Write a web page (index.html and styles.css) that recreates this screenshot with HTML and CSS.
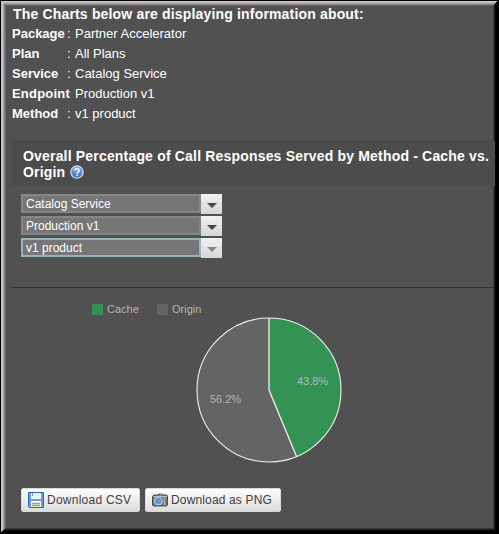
FILE: index.html
```
<!DOCTYPE html>
<html lang="en">
<head>
<meta charset="utf-8">
<title>Charts</title>
<link rel="stylesheet" href="styles.css">
</head>
<body>
<main class="frame">
  <section class="summary">
    <h1>The Charts below are displaying information about:</h1>
    <dl>
      <dt>Package</dt><dd><i>:</i>Partner Accelerator</dd>
      <dt>Plan</dt><dd><i>:</i>All Plans</dd>
      <dt>Service</dt><dd><i>:</i>Catalog Service</dd>
      <dt class="wide">Endpoint</dt><dd><i></i>Production v1</dd>
      <dt>Method</dt><dd><i>:</i>v1 product</dd>
    </dl>
  </section>
  <section class="panel">
    <h2>Overall Percentage of Call Responses Served by Method - Cache vs.<br>Origin
      <svg class="help" width="14" height="14" viewBox="0 0 14 14"><defs><linearGradient id="hg" x2="0" y2="1"><stop stop-color="#8bb2e6"/><stop offset="1" stop-color="#386fba"/></linearGradient></defs><circle cx="7" cy="7" r="6.2" fill="url(#hg)" stroke="#c9dcef" stroke-width="1.2"/><path d="M4.9 5.5C5 3.1 9.1 3.1 9.1 5.4 9.1 6.8 7.1 6.8 7.1 8.5M7.1 9.6v1.4" fill="none" stroke="#fff" stroke-width="1.5"/></svg>
    </h2>
    <div class="selects">
      <div class="select"><span class="value">Catalog Service</span><span class="arrow"></span></div>
      <div class="select"><span class="value">Production v1</span><span class="arrow"></span></div>
      <div class="select focused"><span class="value">v1 product</span><span class="arrow"></span></div>
    </div>
    <div class="chart">
      <div class="legend"><span class="swatch cache"></span><span class="name">Cache</span><span class="swatch origin"></span><span class="name">Origin</span></div>
      <svg class="pie" width="146" height="146" viewBox="0 0 146 146">
        <circle cx="73" cy="73" r="72" fill="#646464"/>
        <path d="M73 73V1A72 72 0 0 1 100.5 139.6Z" fill="#359255"/>
        <path d="M73 1V73L100.5 139.6" fill="none" stroke="#f0f0f0" stroke-width="1.3"/>
        <circle cx="73" cy="73" r="72" fill="none" stroke="#f0f0f0" stroke-width="1.1"/>
        <text x="101" y="68" textLength="31">43.8%</text>
        <text x="14" y="86" textLength="31">56.2%</text>
      </svg>
    </div>
    <div class="buttons">
      <button class="csv"><svg width="16" height="16" viewBox="0 0 16 16"><path d="M.5.5h15v15h-14l-1-1z" fill="#6d9cdf" stroke="#2e62b5"/><path d="M3 1h10v6H3z" fill="#edf4fc"/><path d="M4.5 1v3" stroke="#7795c4"/><path d="M3 9h10v6H3z" fill="#fff"/><path d="M4 11.5h8M4 13.5h8" stroke="#80b953" stroke-width="1.4"/></svg><span>Download CSV</span></button>
      <button class="png"><svg width="16" height="16" viewBox="0 0 16 16"><path d="M.5 4 2 3h4l1-1h3l1 1h3.5l1 1v9l-1 1H1.5l-1-1z" fill="#777" stroke="#4b4b4b"/><path d="M1 4.5h14" stroke="#bbb"/><path d="M12.5 4v9" stroke="#bcbcbc"/><path d="M8 2h2" stroke="#e1c45d"/><circle cx="6.3" cy="9" r="4" fill="#559be0" stroke="#c4d1dc"/></svg><span>Download as PNG</span></button>
    </div>
  </section>
</main>
</body>
</html>
```
FILE: styles.css
```
* { box-sizing: border-box; }
body { margin: 0; background: #000; font-family: "Liberation Sans", Arial, sans-serif; color: #fff; overflow: hidden; }
.frame {
  width: 496px; height: 531px; margin: 1px 0 0 1px; padding: 3px 2px 0 11px; background: #515151;
  box-shadow: inset 1px 1px #c9c3c5, inset -1px -1px #000, inset 2px 2px #c3bdbf, inset -2px -2px #070707, inset 3px 3px #a39e9f, inset -3px -3px #1c1c1c, inset 4px 4px #858283, inset -4px -4px #3d3d3d, inset 5px 5px #676566;
}
h1, h2, dl, dd { margin: 0; }
h1 { padding-left: 1px; font-size: 14px; letter-spacing: .17px; line-height: 20px; white-space: nowrap; }
dl { display: grid; grid-template-columns: 55px 1fr; grid-auto-rows: 20px; font-size: 13px; line-height: 20px; }
dt { font-weight: bold; }
.wide { letter-spacing: .2px; }
dd { display: flex; }
dd i { width: 8px; font-style: normal; }
.panel { margin-top: 17px; }
h2 { height: 45px; padding: 6px 0 0 11px; border-top: 1px solid #454545; background: #4c4c4c; font-size: 14px; letter-spacing: .18px; line-height: 16px; white-space: nowrap; }
.help { margin-left: 1px; vertical-align: -2px; }
.selects { display: flex; flex-direction: column; gap: 2px; height: 101px; padding: 8px 0 0 9px; }
.select { display: flex; width: 201px; height: 20px; font-size: 12px; line-height: 16px; }
.value { flex: 1; height: 19px; padding-left: 3px; border: 2px solid #868686; background: #767676; }
.focused .value { border-color: #8db9bd; }
.arrow { display: flex; justify-content: center; width: 21px; height: 20px; padding-top: 9px; background: linear-gradient(#f2f2f2, #d5d5d5); }
.arrow::before { content: ""; width: 0; height: 0; border: 5px solid transparent; border-top-color: #474747; border-bottom: 0; }
.focused .arrow::before { border-top-color: #858585; }
.chart { height: 200px; padding-top: 14px; border-top: 1px solid #303030; }
.legend { display: flex; align-items: center; height: 15px; padding-left: 80px; color: #b5b5b5; font-size: 11px; line-height: 14px; }
.swatch { width: 11px; height: 11px; margin-right: 4px; }
.cache { background: #359255; }
.origin { background: #646464; }
.name { width: 50px; padding-bottom: 1px; line-height: 12px; }
.pie { display: block; margin-left: 184px; }
.pie text { font-size: 11px; fill: #b5b5b5; }
.buttons { display: flex; gap: 5px; padding: 1px 0 0 9px; }
button { display: flex; align-items: center; gap: 3px; height: 24px; padding: 0 0 0 6px; border: 1px solid #d8d8d8; border-radius: 2px; background: linear-gradient(#fff, #dcdcdc); color: #404040; font: 12px "Liberation Sans", Arial, sans-serif; letter-spacing: .25px; white-space: nowrap; }
button svg { flex: none; }
.csv { width: 119px; }
.png { width: 136px; letter-spacing: .15px; }
```
